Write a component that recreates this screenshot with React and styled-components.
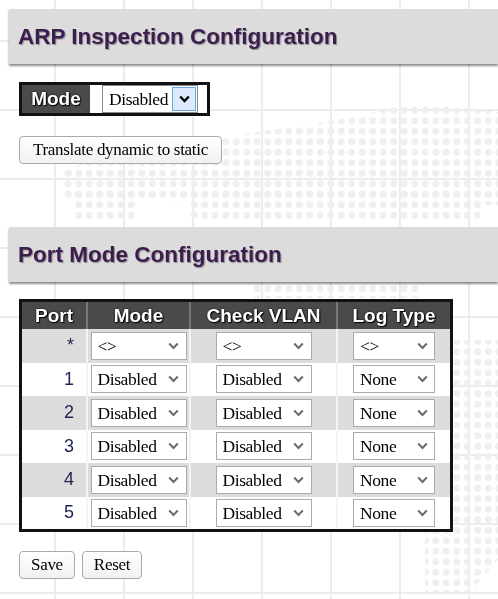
import React from 'react'
import styled, { createGlobalStyle } from 'styled-components'

const GlobalStyle = createGlobalStyle`
  html, body {
    margin: 0;
    padding: 0;
  }
  body {
    background-color: #fff;
    background-image:
      linear-gradient(to right, #ececec 0, #ececec 2px, transparent 2px),
      linear-gradient(to bottom, #ececec 0, #ececec 2px, transparent 2px);
    background-size: 69px 69px;
    background-position: 54px 40px;
    font-family: "Liberation Sans", Arial, sans-serif;
  }
`

// world map dots behind the page
const mapAreas = [
  '62,168 230,136 350,118 400,106 445,106 498,112 498,205 470,205 460,200 250,202 62,200',
  '72,190 135,190 135,220 72,220',
  '190,190 480,190 480,222 190,222',
  '250,284 420,284 420,298 250,298',
  '450,340 498,340 498,478 450,478',
  '425,470 498,470 498,560 470,592 425,592',
]

const Backdrop = styled.svg`
  position: fixed;
  inset: 0;
  width: 100%;
  height: 100%;
  z-index: 0;
  pointer-events: none;
`

const MapDots = () => (
  <Backdrop viewBox="0 0 498 599" preserveAspectRatio="none">
    <defs>
      <pattern id="dots" width="10.5" height="10.5" patternUnits="userSpaceOnUse">
        <circle cx="5.25" cy="5.25" r="3.5" fill="#efefef" />
      </pattern>
    </defs>
    {mapAreas.map((pts) => (
      <polygon key={pts} points={pts} fill="url(#dots)" />
    ))}
  </Backdrop>
)

const Page = styled.div`
  position: relative;
  z-index: 1;
  padding-top: 9px;
  padding-bottom: 20px;
`

const Heading = styled.div`
  margin-left: 9px;
  height: 55px;
  display: flex;
  align-items: center;
  padding-left: 9px;
  background: #dcdcdc;
  box-shadow: 0 2px 2px rgba(0, 0, 0, 0.45);
  margin-top: ${(p) => p.$top || 0}px;

  h1 {
    margin: 0;
    font-family: "Liberation Sans", Arial, sans-serif;
    font-size: 22.5px;
    font-weight: bold;
    color: #3c1d4e;
    text-shadow: 1px 1px 1px rgba(0, 0, 0, 0.35);
  }
`

const Section = styled.div`
  padding-left: 19px;
  display: flex;
  flex-direction: column;
  align-items: flex-start;
`

const ModeBox = styled.div`
  margin-top: 18px;
  display: flex;
  border: 3px solid #111;
  height: 28px;
`

const ModeLabel = styled.div`
  width: 68px;
  background: #4a4a4a;
  color: #fff;
  font-weight: bold;
  font-size: 19px;
  display: flex;
  align-items: center;
  justify-content: center;
  text-shadow: 1px 1px 1px #000, 0 0 2px #000;
`

const ModeValue = styled.div`
  background: #fff;
  padding: 0 9px 0 12px;
  display: flex;
  align-items: center;
`

const Button = styled.button`
  height: 28px;
  padding: 0 ${(p) => p.$pad || 11}px;
  margin-top: ${(p) => p.$top || 0}px;
  background: linear-gradient(#ffffff, #f1f1f1);
  border: 1px solid #a9a9a9;
  border-radius: 4px;
  font-family: "Liberation Serif", "Times New Roman", serif;
  font-size: 17px;
  color: #000;
  letter-spacing: -0.3px;
`

const SelectWrap = styled.span`
  position: relative;
  display: inline-flex;
  width: ${(p) => p.$width}px;
  height: ${(p) => p.$height || 28}px;
`

const NativeSelect = styled.select`
  appearance: none;
  width: 100%;
  height: 100%;
  box-sizing: border-box;
  margin: 0;
  padding: 0 0 0 6px;
  background: #fff;
  border: 1px solid ${(p) => (p.$focus ? '#8a8a8a' : '#a9abb3')};
  border-radius: 0;
  font-family: "Liberation Serif", "Times New Roman", serif;
  font-size: 17.5px;
  letter-spacing: -0.4px;
  color: #000;
`

const Arrow = styled.span`
  position: absolute;
  top: ${(p) => (p.$focus ? 2 : 1)}px;
  bottom: ${(p) => (p.$focus ? 2 : 1)}px;
  right: ${(p) => (p.$focus ? 2 : 1)}px;
  width: ${(p) => (p.$focus ? 22 : 24)}px;
  display: flex;
  align-items: center;
  justify-content: center;
  pointer-events: none;
  background: ${(p) => (p.$focus ? '#dceafb' : 'transparent')};
  border: ${(p) => (p.$focus ? '1px solid #6aa6e3' : 'none')};
  color: ${(p) => (p.$focus ? '#000' : '#6b6b6b')};
`

const Select = ({ value, options, width, focus }) => (
  <SelectWrap $width={width}>
    <NativeSelect defaultValue={value} $focus={focus}>
      {options.map((o) => (
        <option key={o}>{o}</option>
      ))}
    </NativeSelect>
    <Arrow $focus={focus}>
      <svg width="11" height="8" viewBox="0 0 11 8">
        <path d="M1.2 1.5 L5.5 6 L9.8 1.5" fill="none" stroke="currentColor" strokeWidth={focus ? 2.4 : 2} />
      </svg>
    </Arrow>
  </SelectWrap>
)

const PortTable = styled.table`
  margin-top: 17px;
  border: 3px solid #111;
  border-collapse: collapse;
  table-layout: fixed;
  width: 428px;
`

const Th = styled.th`
  width: ${(p) => p.$w}px;
  height: 27px;
  padding: 0;
  background: #4a4a4a;
  color: #fff;
  font-size: 19px;
  font-weight: bold;
  text-align: center;
  text-shadow: 1px 1px 1px #000, 0 0 2px #000;
  & + & {
    border-left: 2px solid #777;
  }
`

const Row = styled.tr`
  height: 33.5px;
  background: ${(p) => (p.$shade ? '#dcdcdc' : '#fff')};
`

const Td = styled.td`
  padding: 0;
  text-align: center;
  vertical-align: middle;
  & + & {
    border-left: 2px solid ${(p) => (p.$shade ? '#efefef' : '#f4f4f4')};
  }
`

const PortCell = styled(Td)`
  text-align: right;
  padding-right: 12px;
  font-size: 18px;
  color: #1d2350;
`

const Actions = styled.div`
  margin-top: 19px;
  display: flex;
  gap: 7px;
`

const modes = ['Disabled', 'Enabled']
const logTypes = ['None', 'Deny', 'Permit', 'ALL']

const ports = [
  { port: '*', mode: '<>', vlan: '<>', log: '<>' },
  { port: 1, mode: 'Disabled', vlan: 'Disabled', log: 'None' },
  { port: 2, mode: 'Disabled', vlan: 'Disabled', log: 'None' },
  { port: 3, mode: 'Disabled', vlan: 'Disabled', log: 'None' },
  { port: 4, mode: 'Disabled', vlan: 'Disabled', log: 'None' },
  { port: 5, mode: 'Disabled', vlan: 'Disabled', log: 'None' },
]

export default function App() {
  return (
    <>
      <GlobalStyle />
      <MapDots />
      <Page>
        <Heading>
          <h1>ARP Inspection Configuration</h1>
        </Heading>
        <Section>
          <ModeBox>
            <ModeLabel>Mode</ModeLabel>
            <ModeValue>
              <Select value="Disabled" options={modes} width={96} focus />
            </ModeValue>
          </ModeBox>
          <Button $pad={13} $top={20}>Translate dynamic to static</Button>
        </Section>

        <Heading $top={63}>
          <h1>Port Mode Configuration</h1>
        </Heading>
        <Section>
          <PortTable>
            <thead>
              <tr>
                <Th $w={64}>Port</Th>
                <Th $w={101}>Mode</Th>
                <Th $w={145}>Check VLAN</Th>
                <Th $w={112}>Log Type</Th>
              </tr>
            </thead>
            <tbody>
              {ports.map((r, i) => {
                const shade = i % 2 === 0
                return (
                  <Row key={r.port} $shade={shade}>
                    <PortCell $shade={shade}>{r.port}</PortCell>
                    <Td $shade={shade}>
                      <Select value={r.mode} options={['<>', ...modes]} width={96} />
                    </Td>
                    <Td $shade={shade}>
                      <Select value={r.vlan} options={['<>', ...modes]} width={96} />
                    </Td>
                    <Td $shade={shade}>
                      <Select value={r.log} options={['<>', ...logTypes]} width={82} />
                    </Td>
                  </Row>
                )
              })}
            </tbody>
          </PortTable>
          <Actions>
            <Button>Save</Button>
            <Button>Reset</Button>
          </Actions>
        </Section>
      </Page>
    </>
  )
}
